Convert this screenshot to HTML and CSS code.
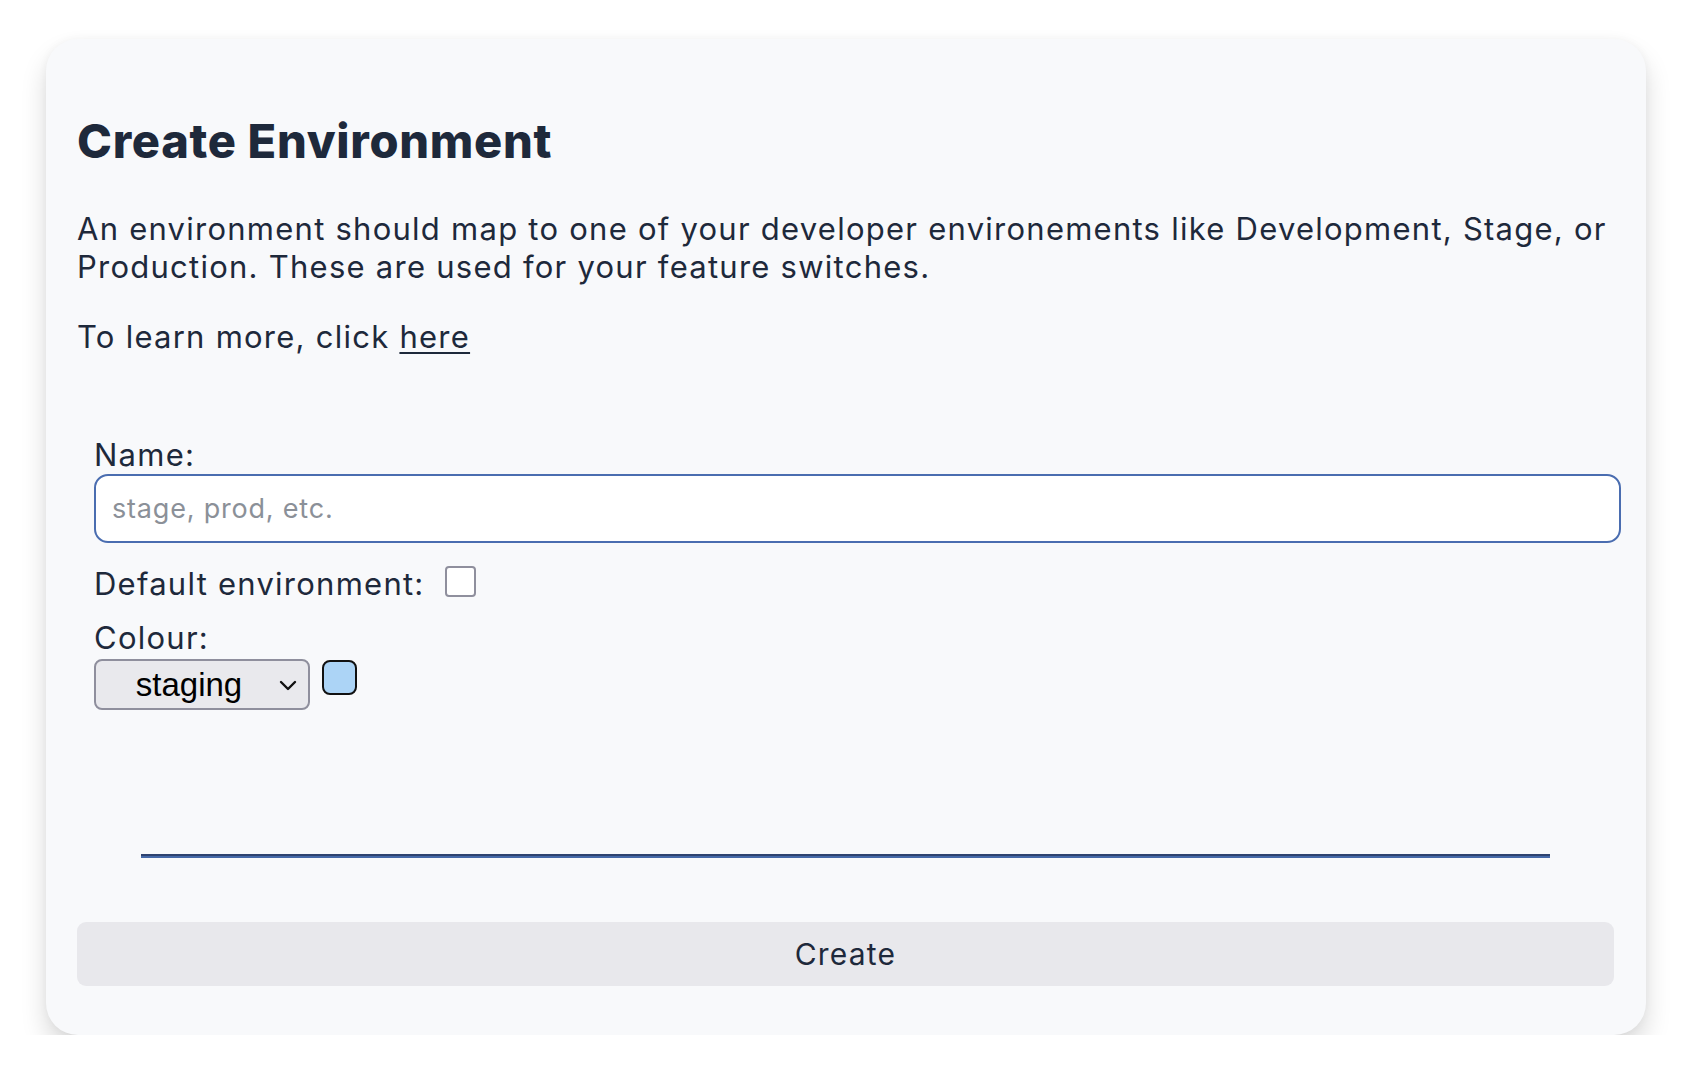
FILE: index.html
```html
<!DOCTYPE html>
<html lang="en">
<head>
<meta charset="utf-8">
<title>Create Environment</title>
<link rel="stylesheet" href="styles.css">
</head>
<body>
<main class="card">
  <h1 class="title">Create Environment</h1>
  <p class="text">An environment should map to one of your developer environements like Development, Stage, or Production. These are used for your feature switches.</p>
  <p class="text">To learn more, click <a class="link" href="#">here</a></p>

  <form class="form">
    <label class="label" for="name">Name:</label>
    <input class="input" id="name" type="text" placeholder="stage, prod, etc.">

    <div class="row">
      <label class="label" for="default">Default environment:</label>
      <input class="checkbox" id="default" type="checkbox">
    </div>

    <label class="label colour-label" for="colour">Colour:</label>
    <div class="colour-row">
      <div class="select-wrap">
        <select class="select" id="colour">
          <option>staging</option>
          <option>production</option>
          <option>development</option>
        </select>
        <svg class="chevron" width="18" height="11" viewBox="0 0 18 11" aria-hidden="true">
          <path d="M2 2 L9 9 L16 2" fill="none" stroke="#111" stroke-width="2.4" stroke-linecap="round" stroke-linejoin="round"/>
        </svg>
      </div>
      <span class="swatch"></span>
    </div>
  </form>

  <hr class="divider">

  <button class="button" type="button">Create</button>
</main>
</body>
</html>
```

FILE: styles.css
```css
* {
  box-sizing: border-box;
}

html, body {
  margin: 0;
  padding: 0;
  background: #ffffff;
}

body {
  font-family: Inter, "Open Sans", "Liberation Sans", sans-serif;
  color: #1e293b;
}

.card {
  display: flex;
  flex-direction: column;
  width: 1600px;
  height: 996px;
  margin: 39px 0 0 46px;
  padding: 73px 32px 0 31px;
  background: #f8f9fb;
  border-radius: 32px;
  box-shadow: 0 15px 26px rgba(0, 0, 0, 0.15), 0 0 10px rgba(0, 0, 0, 0.04);
}

.title {
  margin: 0;
  font-size: 47px;
  line-height: 58px;
  font-weight: 800;
  letter-spacing: 0.7px;
}

.text {
  margin: 40px 0 0 0;
  font-size: 31px;
  line-height: 38px;
  letter-spacing: 1.25px;
}

.text + .text {
  margin-top: 32px;
}

.link {
  color: inherit;
  text-decoration: underline;
  text-underline-offset: 4px;
  text-decoration-thickness: 2px;
}

.form {
  display: flex;
  flex-direction: column;
  align-items: flex-start;
  margin-top: 80px;
  padding-left: 17px;
}

.label {
  font-size: 31px;
  line-height: 38px;
  letter-spacing: 1.25px;
}

.input {
  width: 1527px;
  height: 69px;
  margin: 0;
  padding: 0 16px;
  border: 2px solid #4a6db0;
  border-radius: 14px;
  background: #ffffff;
  font-family: Inter, "Open Sans", sans-serif;
  font-size: 27px;
  color: #1e293b;
  letter-spacing: 0.8px;
  outline: none;
}

.input::placeholder {
  color: #8b9098;
}

.row {
  display: flex;
  align-items: flex-end;
  gap: 20px;
  margin-top: 22px;
}

.checkbox {
  appearance: none;
  -webkit-appearance: none;
  width: 31px;
  height: 31px;
  margin: 0 0 6px 0;
  border: 2px solid #8f8f9d;
  border-radius: 4px;
  background: #ffffff;
}

.colour-label {
  margin-top: 16px;
}

.colour-row {
  display: flex;
  align-items: flex-start;
  gap: 12px;
  margin-top: 2px;
}

.select-wrap {
  position: relative;
  width: 216px;
  height: 51px;
}

.select {
  appearance: none;
  -webkit-appearance: none;
  width: 216px;
  height: 51px;
  margin: 0;
  padding: 0 40px 0 14px;
  border: 2px solid #8f8f9d;
  border-radius: 8px;
  background: #e9e9ed;
  font-family: "Liberation Sans", Arial, sans-serif;
  font-size: 33px;
  color: #000000;
  text-align: center;
  text-align-last: center;
}

.chevron {
  position: absolute;
  left: 185px;
  top: 21px;
  pointer-events: none;
}

.swatch {
  display: block;
  width: 35px;
  height: 35px;
  margin-top: 1px;
  border: 2.5px solid #111111;
  border-radius: 8px;
  background: #acd4f6;
}

.divider {
  width: auto;
  margin: 144px 64px 0 64px;
  height: 0;
  border: 0;
  border-top: 2px solid #2e4370;
  border-bottom: 2px solid #4569a8;
}

.button {
  width: 100%;
  height: 64px;
  margin-top: 64px;
  padding: 0;
  border: none;
  border-radius: 9px;
  background: #e8e8ec;
  font-family: Inter, "Open Sans", sans-serif;
  font-size: 30px;
  letter-spacing: 1.2px;
  color: #1e293b;
}
```
